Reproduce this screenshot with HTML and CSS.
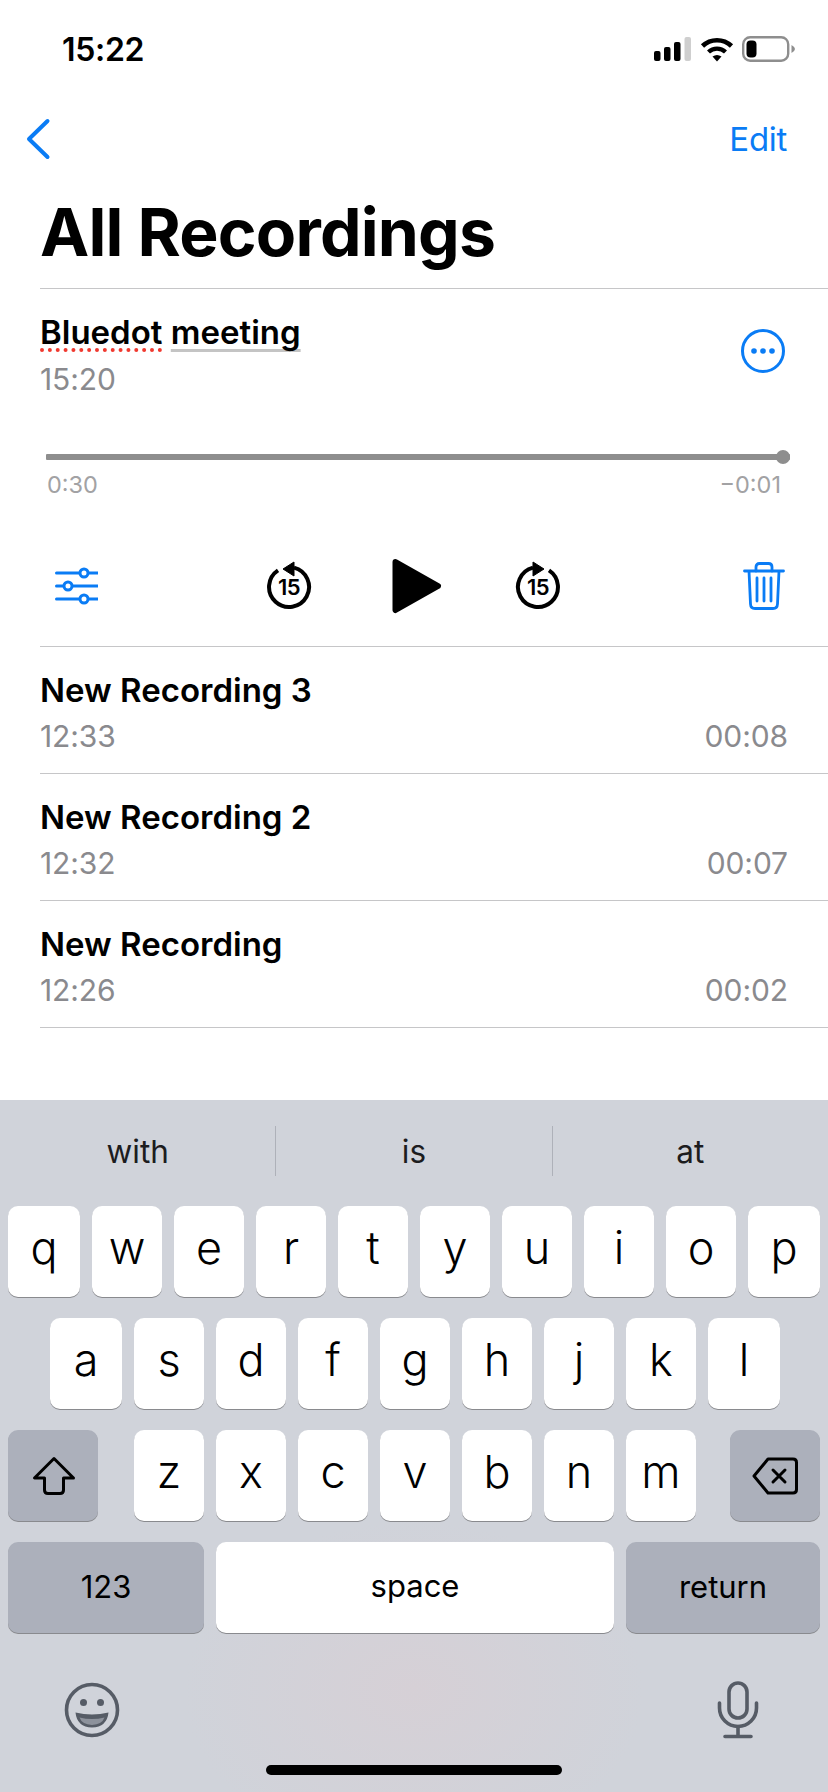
FILE: index.html

```html
<!DOCTYPE html>
<html lang="en">
<head>
  <meta charset="UTF-8" />
  <meta name="viewport" content="width=device-width, initial-scale=1.0"/>
  <title>All Recordings</title>
  <link rel="stylesheet" href="styles.css">
</head>
<body>
  <div class="status">
    <span class="clock">15:22</span>
    <div class="status-icons">
      <svg width="38" height="24" viewBox="0 0 38 24">
        <rect x="0" y="14" width="6.5" height="10" rx="2"/>
        <rect x="10" y="10" width="6.5" height="14" rx="2"/>
        <rect x="20" y="5" width="6.5" height="19" rx="2"/>
        <rect x="30.5" y="0" width="6.5" height="24" rx="2" fill="#cfcfcf"/>
      </svg>
      <svg width="34" height="26" viewBox="0 0 34 26">
        <path d="M2.5 10A21 21 0 0 1 31.5 10" fill="none" stroke="#000" stroke-width="4.6"/>
        <path d="M8.5 16A12.5 12.5 0 0 1 25.500 16" fill="none" stroke="#000" stroke-width="4.400"/>
        <path d="M12.500 20.500Q17 17.500 21.500 20.500L17 25.500Z"/>
      </svg>
      <svg width="54" height="26" viewBox="0 0 54 26">
        <rect x="1.200" y="1.200" width="45" height="23.500" rx="7" fill="none" stroke="#8e8e8e" stroke-width="2.400"/>
        <rect x="4.500" y="4.500" width="10" height="17" rx="4"/>
        <path d="M49.500 9Q53 11 53 13T49.500 17Z" fill="#8e8e8e"/>
      </svg>
    </div>
  </div>

  <div class="nav">
    <svg width="26" height="42" viewBox="0 0 26 42"><path d="M22.500 3L4 21L22.500 39" fill="none" stroke="#0a7cf5" stroke-width="4" stroke-linecap="round" stroke-linejoin="round"/></svg>
    <span class="edit">Edit</span>
  </div>

  <h1 class="title">All Recordings</h1>

  <div class="list">
    <div class="current">
      <div class="current-head">
        <div>
          <div class="rec-name"><span class="misspelt">Bluedot</span> <span class="suggested">meeting</span></div>
          <div class="rec-time current-time">15:20</div>
        </div>
        <svg class="more" width="46" height="46" viewBox="0 0 46 46">
          <circle cx="23" cy="23" r="20.500" fill="none" stroke="#0a7cf5" stroke-width="3"/>
          <circle cx="14" cy="23" r="2.800" fill="#0a7cf5"/>
          <circle cx="23" cy="23" r="2.800" fill="#0a7cf5"/>
          <circle cx="32" cy="23" r="2.800" fill="#0a7cf5"/>
        </svg>
      </div>

      <div class="track"><div class="thumb"></div></div>
      <div class="track-times"><span>0:30</span><span>−0:01</span></div>

      <div class="controls">
        <svg class="sliders" width="43" height="40" viewBox="0 0 43 40" fill="none" stroke="#0a7cf5" stroke-width="3" stroke-linecap="round">
          <path d="M1.500 7H43M1.500 20H43M1.500 33H43"/>
          <circle cx="29" cy="7" r="4" fill="#fff"/>
          <circle cx="13" cy="20" r="4" fill="#fff"/>
          <circle cx="29" cy="33" r="4" fill="#fff"/>
        </svg>
        <svg class="skip-back" width="48" height="54" viewBox="0 0 48 54">
          <path d="M29 8.600A20 20 0 1 1 13 11.300" fill="none" stroke="#000" stroke-width="4"/>
          <path d="M18 10L29 3V17Z" stroke="#000" stroke-width="1" stroke-linejoin="round"/>
          <text class="skip-num" x="24" y="36" text-anchor="middle">15</text>
        </svg>
        <svg class="play" width="57" height="60" viewBox="0 0 57 60">
          <path d="M7.500 6L50 30L7.500 54Z" stroke="#000" stroke-width="6" stroke-linejoin="round"/>
        </svg>
        <svg class="skip-fwd" width="48" height="54" viewBox="0 0 48 54">
          <path d="M19 8.600A20 20 0 1 0 35 11.300" fill="none" stroke="#000" stroke-width="4"/>
          <path d="M30 10L19 3V17Z" stroke="#000" stroke-width="1" stroke-linejoin="round"/>
          <text class="skip-num" x="24" y="36" text-anchor="middle">15</text>
        </svg>
        <svg class="trash" width="42" height="48" viewBox="0 0 42 48" fill="none" stroke="#0a7cf5" stroke-width="2.800" stroke-linecap="round" stroke-linejoin="round">
          <path d="M1.500 9H40.500M6 9L7.500 42Q7.700 46.500 12 46.500H30Q34.300 46.500 34.500 42L36 9"/>
          <path d="M13 9V5Q13 1.500 16.500 1.500H25.500Q29 1.500 29 5V9"/>
          <path d="M14 16V39M21 16V39M28 16V39"/>
        </svg>
      </div>
    </div>

    <div class="rec">
      <div class="rec-name">New Recording 3</div>
      <div class="rec-line"><span class="rec-time">12:33</span><span class="rec-time">00:08</span></div>
    </div>
    <div class="rec">
      <div class="rec-name">New Recording 2</div>
      <div class="rec-line"><span class="rec-time">12:32</span><span class="rec-time">00:07</span></div>
    </div>
    <div class="rec">
      <div class="rec-name">New Recording</div>
      <div class="rec-line"><span class="rec-time">12:26</span><span class="rec-time">00:02</span></div>
    </div>
  </div>

  <div class="keyboard">
    <div class="suggestions">
      <span>with</span>
      <span>is</span>
      <span>at</span>
    </div>

    <div class="key-row">
      <div class="key wide">q</div><div class="key">w</div><div class="key">e</div><div class="key">r</div><div class="key">t</div><div class="key">y</div><div class="key">u</div><div class="key">i</div><div class="key">o</div><div class="key wide">p</div>
    </div>
    <div class="key-row row-two">
      <div class="key wide">a</div><div class="key">s</div><div class="key">d</div><div class="key">f</div><div class="key">g</div><div class="key">h</div><div class="key">j</div><div class="key">k</div><div class="key wide">l</div>
    </div>
    <div class="key-row row-three">
      <div class="key fn shift">
        <svg width="44" height="40" viewBox="0 0 44 40"><path d="M22 2.500L2.500 22H12.500V34Q12.500 37.500 16 37.500H28Q31.500 37.500 31.500 34V22H41.500Z" fill="none" stroke="#000" stroke-width="3" stroke-linejoin="round"/></svg>
      </div>
      <div class="key">z</div><div class="key">x</div><div class="key">c</div><div class="key">v</div><div class="key">b</div><div class="key">n</div><div class="key">m</div>
      <div class="key fn backspace">
        <svg width="46" height="38" viewBox="0 0 46 38" fill="none" stroke="#000" stroke-width="3" stroke-linejoin="round" stroke-linecap="round"><path d="M16 2H41Q44.500 2 44.500 5.500V32.500Q44.500 36 41 36H16L2 19Z"/><path d="M21 13L33 25M33 13L21 25"/></svg>
      </div>
    </div>
    <div class="key-row">
      <div class="key fn label num">123</div>
      <div class="key label space">space</div>
      <div class="key fn label ret">return</div>
    </div>

    <div class="kb-bottom">
      <svg width="58" height="58" viewBox="0 0 58 58">
        <circle cx="29" cy="29" r="25.500" fill="none" stroke="#565c66" stroke-width="3.600"/>
        <circle cx="20.500" cy="21.500" r="3.500" fill="#565c66"/>
        <circle cx="37.500" cy="21.500" r="3.500" fill="#565c66"/>
        <path d="M12.500 31.500Q29 35.500 45.500 31.500Q44 46 29 46.500Q14 46 12.500 31.500Z" fill="#565c66"/>
        <path d="M16.500 36.500Q29 39.500 41.500 36.500Q39 43.500 29 44Q19 43.500 16.500 36.500Z" fill="#8d929c"/>
      </svg>
      <svg width="42" height="58" viewBox="0 0 42 58" fill="none" stroke="#565c66" stroke-width="3.600" stroke-linecap="round">
        <rect x="12" y="2" width="18" height="35" rx="9"/>
        <path d="M2.500 22V27A18.500 18.500 0 0 0 39.500 27V22"/>
        <path d="M21 45.500V55M8 55.500H34"/>
      </svg>
    </div>
    <div class="home-bar"></div>
  </div>
</body>
</html>
```

FILE: styles.css

```css
* { box-sizing: border-box; }
body { margin: 0; width: 828px; height: 1792px; overflow: hidden; background: #fff; color: #000; font-family: Inter, "Noto Sans", sans-serif; display: flex; flex-direction: column; }

.status { height: 110px; padding: 36px 32px 0 62px; display: flex; justify-content: space-between; align-items: flex-start; flex-shrink: 0; }
.clock { font-size: 32px; line-height: 28px; font-weight: 600; letter-spacing: -0.3px; }
.status-icons { display: flex; align-items: center; gap: 8px; }

.nav { height: 60px; padding: 8px 41px 0 25px; display: flex; justify-content: space-between; align-items: flex-start; flex-shrink: 0; }
.edit { color: #0a7cf5; font-size: 33px; line-height: 44px; margin-top: -1px; letter-spacing: -0.3px; }

.title { margin: 0 0 0 40px; height: 119px; font-size: 66px; line-height: 70px; padding-top: 27px; font-weight: 700; letter-spacing: -0.8px; border-bottom: 1px solid #c6c6c8; flex-shrink: 0; }

.list { margin-left: 40px; flex-shrink: 0; }
.current { height: 358px; padding-top: 25px; border-bottom: 1px solid #c6c6c8; }
.current-head { display: flex; justify-content: space-between; align-items: center; padding-right: 42px; }
.more { margin-top: -9px; }
.rec-name { font-size: 33px; line-height: 36px; font-weight: 600; }
.rec-time { font-size: 30px; line-height: 36px; color: #8a8a8e; letter-spacing: -0.1px; }
.current-time { margin-top: 11px; }
.misspelt { text-decoration: underline dotted #f0392f 4px; text-underline-offset: 4px; text-decoration-skip-ink: none; }
.suggested { text-decoration: underline solid #c4c4c4 3px; text-underline-offset: 5px; text-decoration-skip-ink: none; }

.track { position: relative; height: 6px; margin: 57px 38px 0 6px; background: #8e8e8e; border-radius: 1px; }
.thumb { position: absolute; right: 0; top: -4px; width: 14px; height: 14px; border-radius: 50%; background: #8e8e8e; }
.track-times { display: flex; justify-content: space-between; margin-top: 11px; padding: 0 47px 0 7px; font-size: 23.5px; line-height: 28px; color: #a2a2a4; }

.controls { display: flex; align-items: center; height: 60px; margin-top: 57px; padding-left: 15px; }
.skip-back { margin-left: 167px; }
.play { margin-left: 75px; }
.skip-fwd { margin-left: 69px; }
.trash { margin-left: auto; margin-right: 43px; }
.skip-num { font-family: Inter, sans-serif; font-size: 22px; font-weight: 600; letter-spacing: -0.5px; }

.rec { height: 127px; padding-top: 25px; border-bottom: 1px solid #c6c6c8; }
.rec-line { display: flex; justify-content: space-between; margin-top: 10px; padding-right: 40px; }

.keyboard { margin-top: auto; height: 692px; flex-shrink: 0; padding: 0 8px; background: #d0d3da radial-gradient(ellipse 230px 170px at 50% 590px, #d6d0d6, transparent); }
.suggestions { height: 106px; margin: 0 -8px; padding: 26px 0 30px; display: flex; }
.suggestions span { flex: 1; display: flex; align-items: center; justify-content: center; font-size: 31.5px; color: #1c1c1e; border-right: 1px solid #aeb1b9; }
.suggestions span:last-child { border-right: none; }

.key-row { display: flex; gap: 12px; height: 91px; margin-bottom: 21px; }
.row-two { padding-left: 42px; }
.key { width: 70px; height: 91px; background: #fff; border-radius: 10px; box-shadow: 0 1px 0 #898a8e; display: flex; align-items: center; justify-content: center; font-size: 45px; font-weight: 300; padding-bottom: 8px; }
.key.wide { width: 72px; }
.key.fn { background: #acb0bb; }
.key.shift { width: 90px; margin-right: 24px; padding: 0 0 0 2px; }
.key.backspace { width: 90px; margin-left: 22px; padding: 0; }
.key.label { font-size: 31px; font-weight: 400; padding-bottom: 2px; }
.key.num { width: 196px; }
.key.space { width: 398px; padding-bottom: 5px; }
.key.ret { width: 194px; }

.kb-bottom { display: flex; justify-content: space-between; align-items: flex-start; padding: 28px 61px 0 55px; margin-top: -1px; }
.home-bar { width: 296px; height: 10px; margin: 26px auto 0; border-radius: 5px; background: #000; }
```
